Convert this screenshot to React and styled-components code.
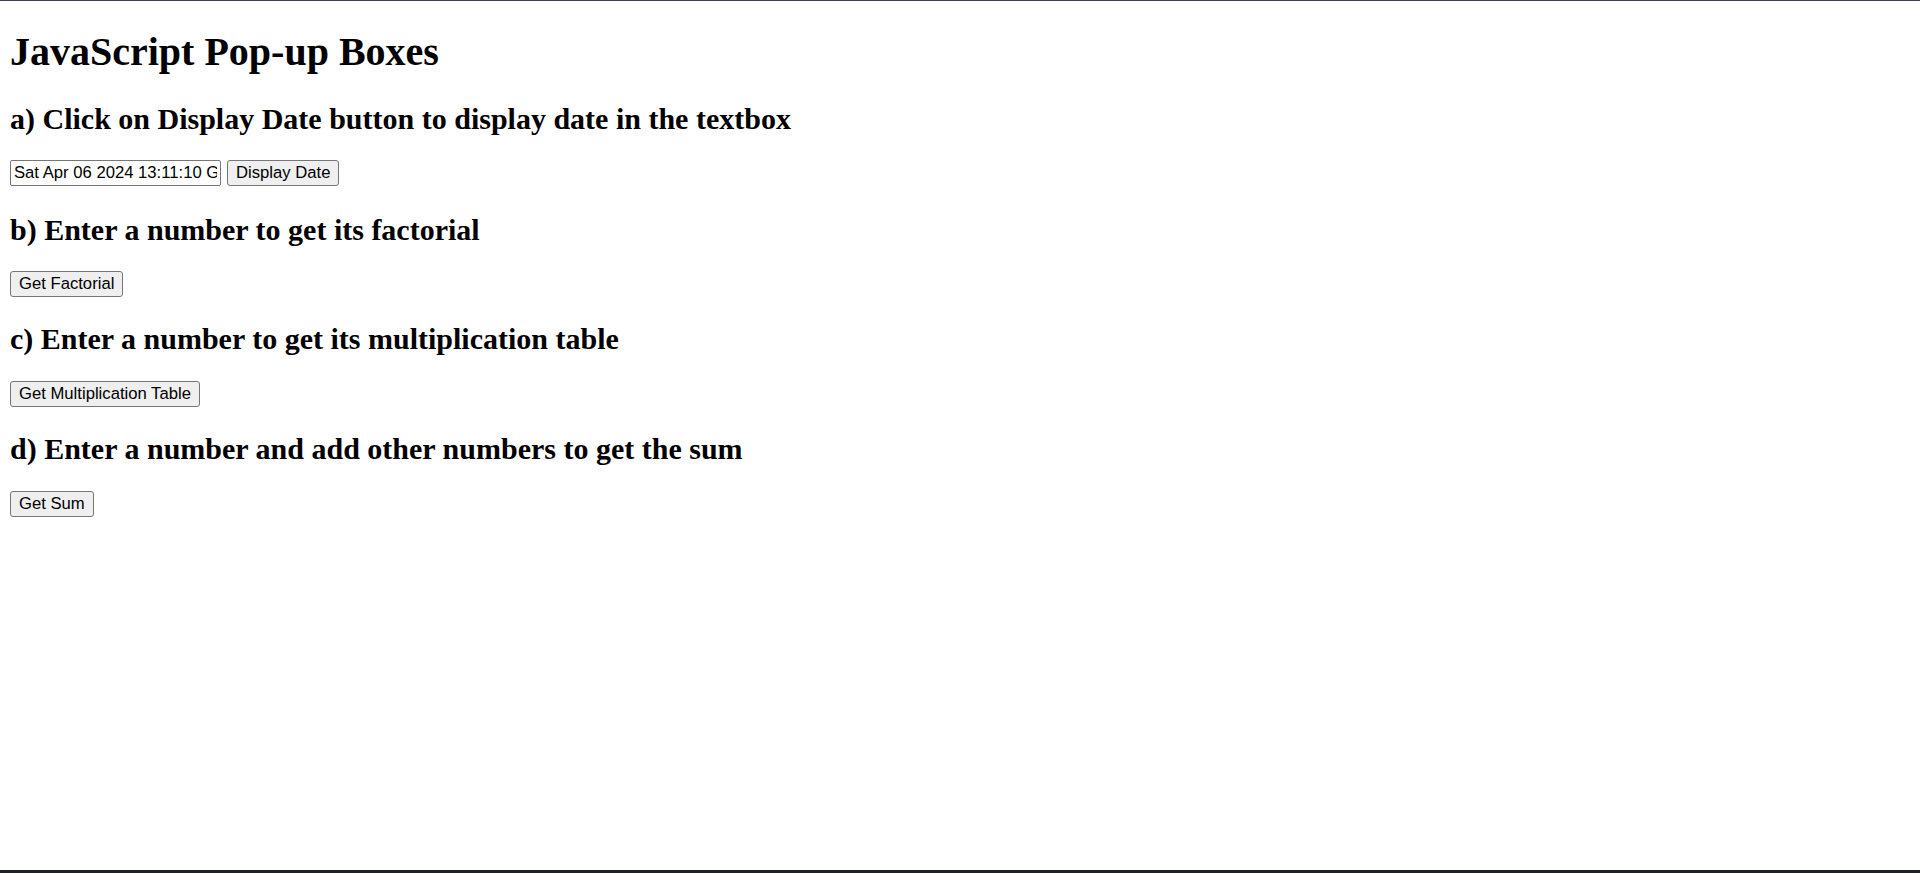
import React, { useState } from "react";
import styled, { createGlobalStyle } from "styled-components";

const GlobalStyle = createGlobalStyle`
  html, body {
    margin: 0;
    padding: 0;
    background: #ffffff;
  }
`;

const Page = styled.div`
  min-height: 100vh;
  box-sizing: border-box;
  padding: 0 10px;
  border-top: 1px solid #3c4050;
  border-bottom: 3px solid #1f1f29;
  font-family: "Liberation Serif", "Times New Roman", serif;
  color: #000;
`;

const Title = styled.h1`
  margin: 26.8px 0;
  font-size: 40px;
  font-weight: 700;
`;

const SectionTitle = styled.h2`
  margin: 24.9px 0;
  font-size: 30px;
  font-weight: 700;
`;

const Row = styled.div`
  display: flex;
  align-items: flex-start;
  gap: 6px;
  min-height: ${(p) => (p.withInput ? "27.2px" : "26px")};
`;

const TextBox = styled.input`
  box-sizing: border-box;
  width: 211px;
  height: 26px;
  margin: 0;
  padding: 1px 3px;
  border: 1px solid #767676;
  border-radius: 2px;
  font-family: "Liberation Sans", Arial, sans-serif;
  font-size: 16.67px;
  color: #000;
  background: #fff;
  outline: none;
`;

const Button = styled.button`
  box-sizing: border-box;
  height: 26px;
  margin: 0;
  padding: 1px 8px;
  border: 1px solid #767676;
  border-radius: 3px;
  background: #efefef;
  font-family: "Liberation Sans", Arial, sans-serif;
  font-size: 16.67px;
  color: #000;
  cursor: pointer;

  &:hover {
    background: #e5e5e5;
  }
`;

const factorial = (n) => (n <= 1 ? 1 : n * factorial(n - 1));

const App = () => {
  const [date, setDate] = useState("Sat Apr 06 2024 13:11:10 GMT+0530 (India Standard Time)");

  const getFactorial = () => {
    const n = parseInt(window.prompt("Enter a number"), 10);
    if (!isNaN(n)) window.alert(`Factorial of ${n} is ${factorial(n)}`);
  };

  const getTable = () => {
    const n = parseInt(window.prompt("Enter a number"), 10);
    if (isNaN(n)) return;
    const lines = [];
    for (let i = 1; i <= 10; i++) lines.push(`${n} x ${i} = ${n * i}`);
    window.alert(lines.join("\n"));
  };

  const getSum = () => {
    let sum = parseFloat(window.prompt("Enter a number")) || 0;
    while (window.confirm("Add another number?")) {
      sum += parseFloat(window.prompt("Enter a number")) || 0;
    }
    window.alert(`Sum is ${sum}`);
  };

  return (
    <Page>
      <GlobalStyle />
      <Title>JavaScript Pop-up Boxes</Title>

      <SectionTitle>a) Click on Display Date button to display date in the textbox</SectionTitle>
      <Row withInput>
        <TextBox type="text" value={date} onChange={(e) => setDate(e.target.value)} />
        <Button onClick={() => setDate(new Date().toString())}>Display Date</Button>
      </Row>

      <SectionTitle>b) Enter a number to get its factorial</SectionTitle>
      <Row>
        <Button onClick={getFactorial}>Get Factorial</Button>
      </Row>

      <SectionTitle>c) Enter a number to get its multiplication table</SectionTitle>
      <Row>
        <Button onClick={getTable}>Get Multiplication Table</Button>
      </Row>

      <SectionTitle>d) Enter a number and add other numbers to get the sum</SectionTitle>
      <Row>
        <Button onClick={getSum}>Get Sum</Button>
      </Row>
    </Page>
  );
};

export default App;
